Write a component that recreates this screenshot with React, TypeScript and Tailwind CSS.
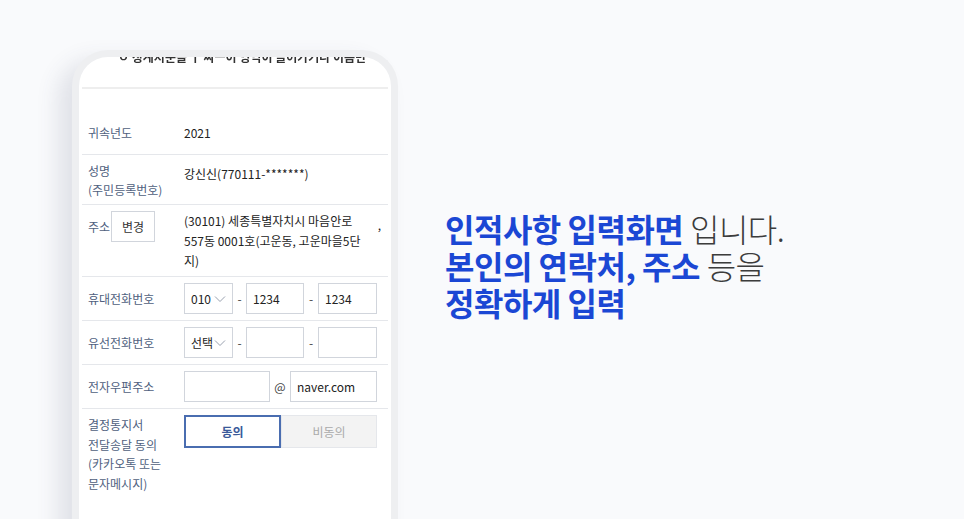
import React from "react";

const font = { fontFamily: '"Noto Sans CJK KR", "Noto Sans", sans-serif' };

const Chevron = () => (
  <svg width="12" height="8" viewBox="0 0 12 8" className="text-gray-400">
    <path d="M1 1.5 L6 6.5 L11 1.5" fill="none" stroke="currentColor" strokeWidth="1" />
  </svg>
);

const Box = ({ w, children }: { w: string; children?: React.ReactNode }) => (
  <div className={`${w} h-[31px] border border-gray-300 bg-white flex items-center px-[6px] text-[12px] text-[#222]`}>
    {children}
  </div>
);

const Dash = ({ w = "w-[13px]" }: { w?: string }) => (
  <span className={`${w} text-center text-[12px] text-[#444]`}>-</span>
);

const Row = ({ label, children, className }: { label: React.ReactNode; children: React.ReactNode; className?: string }) => (
  <div className={`flex border-b border-gray-200 ${className ?? ""}`}>
    <div className="w-[102px] shrink-0 pl-[6px] text-[12px] leading-[19px] text-[#4f5f80]">{label}</div>
    <div className="flex-1 text-[12px] leading-[19px] text-[#222]">{children}</div>
  </div>
);

export default function App() {
  return (
    <div className="h-[519px] w-[964px] overflow-hidden bg-[#f9fafc] flex" style={font}>
      <div className="ml-[72px] mt-[50px] w-[326px] h-[520px] shrink-0 rounded-t-[36px] border-[7px] border-b-0 border-[#eeeff1] bg-white shadow-[-14px_10px_22px_rgba(60,70,100,0.13)] overflow-hidden">
        <div className="h-[32px] border-b-2 border-[#eeeeee] mx-[3px] overflow-hidden relative">
          <div className="absolute left-[36px] top-[-9px] whitespace-nowrap text-[12px] font-bold text-[#333] blur-[0.4px]">
            ㅇ 징계처분을 ㅣ 싸ㅡ이 영역이 들어가거나 이름만
          </div>
        </div>
        <div className="mx-[3px]">
          <Row label="귀속년도" className="pt-[34px] pb-[12px]">
            2021
          </Row>
          <Row label={<>성명<br />(주민등록번호)</>} className="pt-[6px] pb-[5px]">
            <div className="pt-[3px]">강신신(770111-*******)</div>
          </Row>
          <div className="flex border-b border-gray-200 pt-[6px] pb-[5px]">
            <div className="w-[102px] shrink-0 pl-[6px] flex items-center h-[31px] text-[12px] text-[#4f5f80]">
              주소
              <span className="ml-[1px] border border-gray-300 h-[31px] w-[44px] flex items-center justify-center text-[#333]">변경</span>
            </div>
            <div className="flex-1 text-[12px] leading-[20px] text-[#222] relative pr-[20px]">
              (30101) 세종특별자치시 마음안로
              <br />
              557동 0001호(고운동, 고운마을5단
              <br />
              지)
              <span className="absolute right-[7px] top-[4px]">,</span>
            </div>
          </div>
          <div className="flex items-center border-b border-gray-200 py-[6px]">
            <div className="w-[102px] shrink-0 pl-[6px] text-[12px] text-[#4f5f80]">휴대전화번호</div>
            <Box w="w-[49px]">
              <span>010</span>
              <span className="ml-auto"><Chevron /></span>
            </Box>
            <Dash />
            <Box w="w-[58px]">1234</Box>
            <Dash w="w-[14px]" />
            <Box w="w-[59px]">1234</Box>
          </div>
          <div className="flex items-center border-b border-gray-200 py-[6px]">
            <div className="w-[102px] shrink-0 pl-[6px] text-[12px] text-[#4f5f80]">유선전화번호</div>
            <Box w="w-[49px]">
              <span>선택</span>
              <span className="ml-auto"><Chevron /></span>
            </Box>
            <Dash />
            <Box w="w-[58px]" />
            <Dash w="w-[14px]" />
            <Box w="w-[59px]" />
          </div>
          <div className="flex items-center border-b border-gray-200 py-[6px]">
            <div className="w-[102px] shrink-0 pl-[6px] text-[12px] text-[#4f5f80]">전자우편주소</div>
            <Box w="w-[86px]" />
            <span className="w-[20px] text-center text-[12px] text-[#444]">@</span>
            <Box w="w-[87px]">naver.com</Box>
          </div>
          <div className="flex pt-[6px]">
            <div className="w-[102px] shrink-0 pl-[6px] text-[12px] leading-[19.5px] text-[#4f5f80]">
              결정통지서
              <br />
              전달송달 동의
              <br />
              (카카오톡 또는
              <br />
              문자메시지)
            </div>
            <div className="flex h-[33px]">
              <div className="w-[97px] border-2 border-[#4a6db0] flex items-center justify-center text-[12px] font-bold text-[#3a5a9a]">
                동의
              </div>
              <div className="w-[96px] border border-gray-200 bg-[#f3f3f3] flex items-center justify-center text-[12px] text-[#aaaaaa]">
                비동의
              </div>
            </div>
          </div>
        </div>
      </div>
      <div className="ml-[47px] mt-[210px] text-[32px] leading-[37px] tracking-[-0.5px] whitespace-nowrap">
        <div>
          <span className="font-bold text-[#1b47d4]">인적사항 입력화면</span>{" "}
          <span className="font-light text-[#3c3c3c]">입니다.</span>
        </div>
        <div>
          <span className="font-bold text-[#1b47d4]">본인의 연락처, 주소</span>{" "}
          <span className="font-light text-[#3c3c3c]">등을</span>
        </div>
        <div className="font-bold text-[#1b47d4]">정확하게 입력</div>
      </div>
    </div>
  );
}
